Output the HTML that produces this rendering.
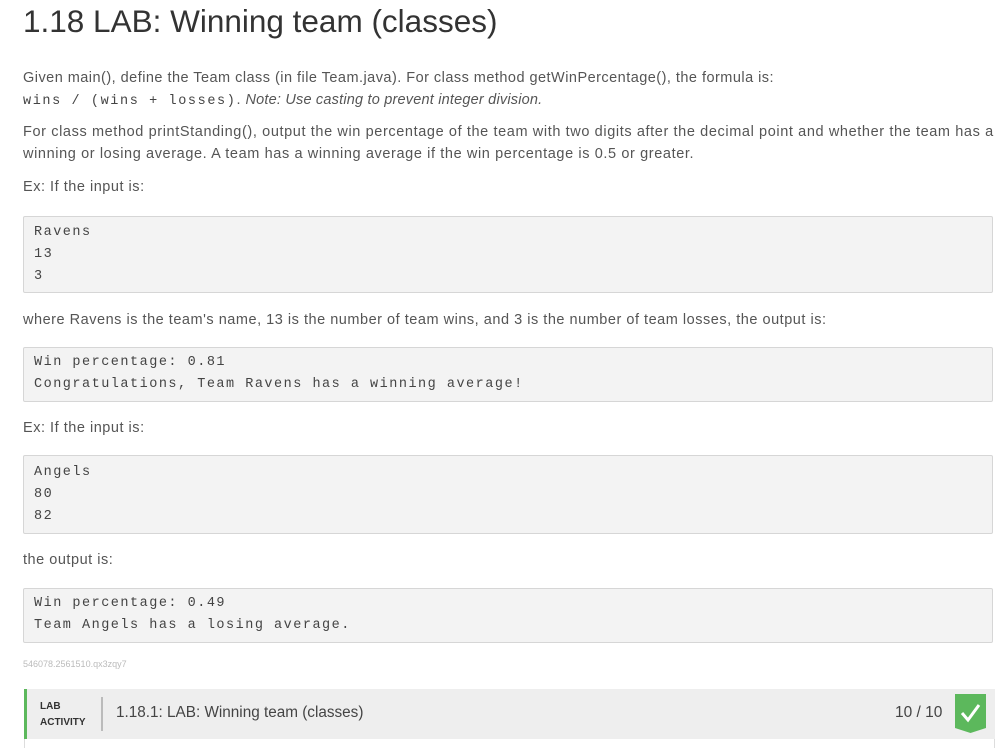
<!DOCTYPE html>
<html><head><meta charset="utf-8"><style>
body{margin:0;background:#fff;font-family:"Liberation Sans",sans-serif;color:#555;}
.abs{position:absolute;white-space:nowrap;}
h1{position:absolute;left:23px;top:3px;margin:0;font-weight:normal;font-size:31.5px;color:#333;}
.t{position:absolute;left:23px;font-size:14.5px;line-height:22px;color:#555;letter-spacing:0.52px;white-space:nowrap;}
.code{position:absolute;left:23px;background:#f3f3f3;border:1px solid #d6d6d6;border-radius:2px;font-family:"Liberation Mono",monospace;font-size:13.5px;line-height:22px;color:#444;padding:0 0 0 10px;box-sizing:border-box;width:970px;letter-spacing:1.5px;}
.m{font-family:"Liberation Mono",monospace;font-size:13.5px;color:#444;letter-spacing:1.6px;}
</style></head><body>
<h1>1.18 LAB: Winning team (classes)</h1>
<div class="t" style="top:67px;letter-spacing:0.47px">Given main(), define the Team class (in file Team.java). For class method getWinPercentage(), the formula is:<br><span class="m">wins / (wins + losses)</span>. <i style="letter-spacing:0.2px">Note: Use casting to prevent integer division.</i></div>
<div class="t" style="top:121px;letter-spacing:0.61px">For class method printStanding(), output the win percentage of the team with two digits after the decimal point and whether the team has a<br>winning or losing average. A team has a winning average if the win percentage is 0.5 or greater.</div>
<div class="t" style="top:176px">Ex: If the input is:</div>
<div class="code" style="top:216px;height:77px;padding-top:5px">Ravens<br>13<br>3</div>
<div class="t" style="top:309px">where Ravens is the team's name, 13 is the number of team wins, and 3 is the number of team losses, the output is:</div>
<div class="code" style="top:347px;height:55px;padding-top:4px">Win percentage: 0.81<br>Congratulations, Team Ravens has a winning average!</div>
<div class="t" style="top:417px">Ex: If the input is:</div>
<div class="code" style="top:455px;height:79px;padding-top:6px">Angels<br>80<br>82</div>
<div class="t" style="top:549px">the output is:</div>
<div class="code" style="top:588px;height:55px;padding-top:4px">Win percentage: 0.49<br>Team Angels has a losing average.</div>
<div class="abs" style="left:23px;top:659px;font-size:9px;color:#bbb">546078.2561510.qx3zqy7</div>
<div style="position:absolute;left:24px;top:689px;width:971px;height:50px;background:#eeeeee;border-left:3px solid #5cb85c;box-sizing:border-box"></div>
<div style="position:absolute;left:24px;top:739px;width:971px;height:9px;border-left:1px solid #ddd;border-right:1px solid #ddd;box-sizing:border-box"></div>
<div class="abs" style="left:40px;top:699px;font-size:10px;font-weight:bold;color:#333;line-height:16px">LAB<br>ACTIVITY</div>
<div style="position:absolute;left:101px;top:697px;width:2px;height:34px;background:#bbb"></div>
<div class="abs" style="left:116px;top:704px;font-size:15.3px;color:#444">1.18.1: LAB: Winning team (classes)</div>
<div class="abs" style="left:895px;top:704px;font-size:15.5px;color:#444">10 / 10</div>
<svg style="position:absolute;left:955px;top:694px" width="31" height="40" viewBox="0 0 31 40"><path d="M0 0H31V34L15.5 39L0 34Z" fill="#5cb85c"/><path d="M7 19L13 26L24 11" stroke="#fff" stroke-width="3" fill="none"/></svg>
</body></html>
